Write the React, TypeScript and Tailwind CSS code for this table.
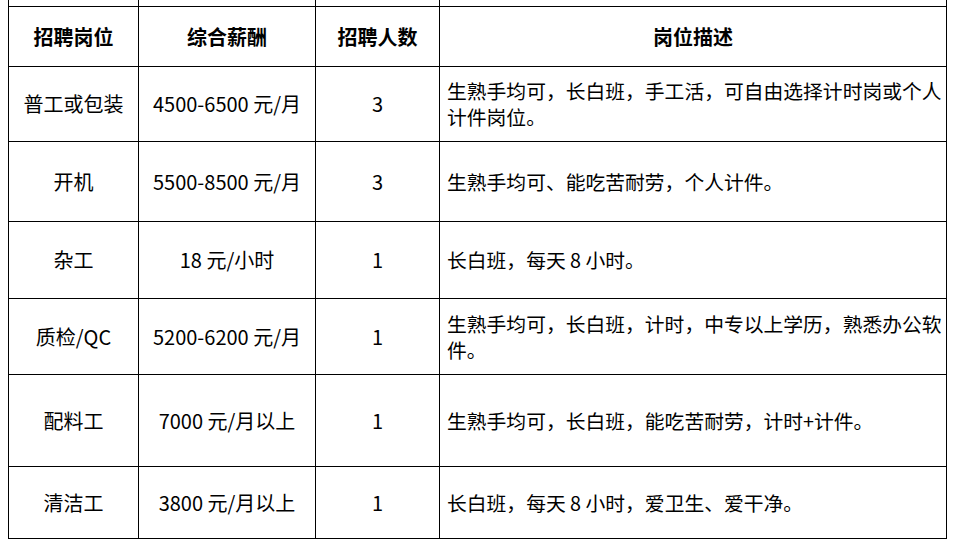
import React from 'react'

type Row = {
  name: string
  pay: string
  count: string
  desc: string[]
  h: string
}

const rows: Row[] = [
  {
    name: '普工或包装',
    pay: '4500-6500 元/月',
    count: '3',
    desc: ['生熟手均可，长白班，手工活，可自由选择计时岗或个人', '计件岗位。'],
    h: 'h-[75px]',
  },
  { name: '开机', pay: '5500-8500 元/月', count: '3', desc: ['生熟手均可、能吃苦耐劳，个人计件。'], h: 'h-[80px]' },
  { name: '杂工', pay: '18 元/小时', count: '1', desc: ['长白班，每天 8 小时。'], h: 'h-[77px]' },
  {
    name: '质检/QC',
    pay: '5200-6200 元/月',
    count: '1',
    desc: ['生熟手均可，长白班，计时，中专以上学历，熟悉办公软', '件。'],
    h: 'h-[76px]',
  },
  { name: '配料工', pay: '7000 元/月以上', count: '1', desc: ['生熟手均可，长白班，能吃苦耐劳，计时+计件。'], h: 'h-[92px]' },
  { name: '清洁工', pay: '3800 元/月以上', count: '1', desc: ['长白班，每天 8 小时，爱卫生、爱干净。'], h: 'h-[73px]' },
]

const grid = 'grid grid-cols-[130px_177px_124px_507px] w-[939px] border-r border-black'
const cell = 'border-l border-black flex items-center justify-center'

export default function App() {
  return (
    <div
      lang="zh-CN"
      className="min-h-screen bg-white pl-[8px] text-[20px] text-black"
      style={{ fontFamily: '"Noto Sans CJK SC", sans-serif' }}
    >
      {/* tail of the table above */}
      <div className={`${grid} h-[6px]`}>
        <div className="border-l border-black" />
        <div className="border-l border-black" />
        <div className="border-l border-black" />
        <div className="border-l border-black" />
      </div>

      {/* header */}
      <div className={`${grid} h-[60px] border-t font-bold`}>
        <div className={cell}>招聘岗位</div>
        <div className={cell}>综合薪酬</div>
        <div className={cell}>招聘人数</div>
        <div className={cell}>岗位描述</div>
      </div>

      {rows.map((r, i) => (
        <div
          key={r.name}
          className={`${grid} ${r.h} border-t ${i === rows.length - 1 ? 'border-b' : ''}`}
        >
          <div className={cell}>{r.name}</div>
          <div className={`${cell} whitespace-nowrap`}>{r.pay}</div>
          <div className={cell}>{r.count}</div>
          <div className="border-l border-black flex flex-col justify-center pl-[7px] text-[19.8px] leading-[26px] whitespace-nowrap">
            {r.desc.map((line) => (
              <div key={line}>{line}</div>
            ))}
          </div>
        </div>
      ))}
    </div>
  )
}
